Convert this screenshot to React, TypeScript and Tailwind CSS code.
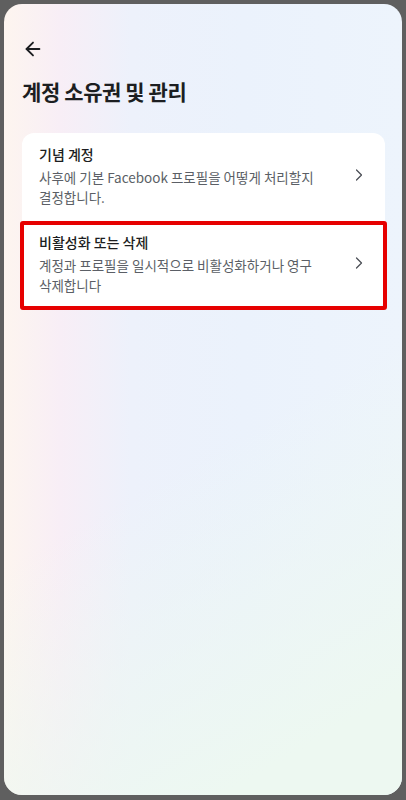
import React from "react";
import { ArrowLeft, ChevronRight } from "lucide-react";

const items = [
  {
    title: "기념 계정",
    desc: "사후에 기본 Facebook 프로필을 어떻게 처리할지 결정합니다.",
  },
  {
    title: "비활성화 또는 삭제",
    desc: "계정과 프로필을 일시적으로 비활성화하거나 영구 삭제합니다",
    highlight: true,
  },
];

export default function App() {
  return (
    <div
      className="w-[406px] h-[800px] bg-[#5f5f5f] pt-[4px] pl-[4px] pr-[4px] pb-[5px]"
      style={{ fontFamily: '"Noto Sans CJK KR", "Noto Sans", sans-serif' }}
    >
      <div className="relative h-full rounded-[18px] overflow-hidden bg-[linear-gradient(90deg,#fdf5ef_0%,#f8eef6_14%,#edf1fb_32%,#ebf2fc_60%,#edf4fc_100%)]">
        {/* bottom right green tint */}
        <div className="absolute inset-0 bg-[linear-gradient(150deg,transparent_55%,#edf8f1_90%)] pointer-events-none" />

        <div className="relative px-[18px]">
          {/* Header */}
          <div className="pt-[34px] h-[62px]">
            <ArrowLeft className="w-[22px] h-[22px] text-[#1c1e21]" strokeWidth={2} />
          </div>
          <h1 className="mt-[10px] text-[21px] font-bold text-[#1c1e21] leading-[30px] tracking-[-0.4px]">
            계정 소유권 및 관리
          </h1>

          {/* Card */}
          <div className="mt-[27px] bg-white rounded-[12px] w-[363px]">
            {items.map((it) => (
              <div
                key={it.title}
                className="relative flex items-center pl-[17px] pr-[16px] pt-[10px] pb-[14px]"
              >
                <div className="flex-1 pr-[22px]">
                  <div className="text-[14px] leading-[22px] text-[#1c1e21] font-medium">
                    {it.title}
                  </div>
                  <div className="mt-[2px] text-[13.5px] leading-[20px] text-[#5b5f66] break-keep">
                    {it.desc}
                  </div>
                </div>
                <ChevronRight className="w-[20px] h-[20px] text-[#4b4f56]" strokeWidth={1.5} />
                {it.highlight && (
                  <div className="absolute -left-[2px] -right-[2px] top-0 -bottom-[1px] border-[4px] border-[#e60000] rounded-[3px] pointer-events-none" />
                )}
              </div>
            ))}
          </div>
        </div>
      </div>
    </div>
  );
}
